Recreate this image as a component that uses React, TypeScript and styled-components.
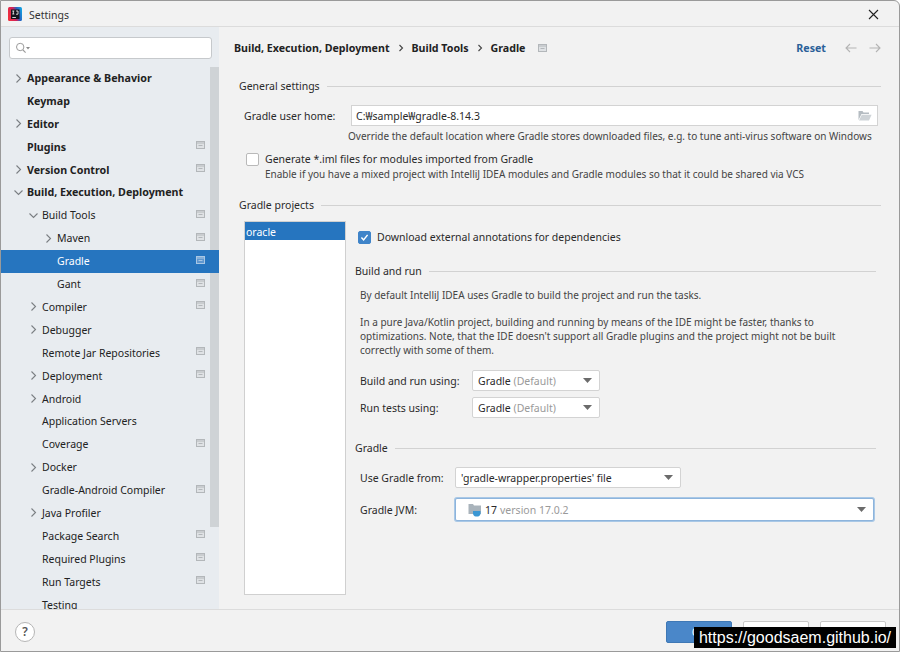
import React, { FC } from "react";
import styled, { createGlobalStyle } from "styled-components";

const FONT = `"Noto Sans", "Open Sans", sans-serif`;

const GlobalStyle = createGlobalStyle`
  html, body {
    margin: 0;
    padding: 0;
    background: #fff;
    font-family: ${FONT};
    font-size: 10.5px;
    color: #2a2a2a;
  }
  * { box-sizing: border-box; }
`;

interface TreeItem {
  label: string;
  depth: number;
  arrow?: "right" | "down";
  bold?: boolean;
  scoped?: boolean;
  selected?: boolean;
}

const treeItems: TreeItem[] = [
  { label: "Appearance & Behavior", depth: 0, arrow: "right", bold: true },
  { label: "Keymap", depth: 0, bold: true },
  { label: "Editor", depth: 0, arrow: "right", bold: true },
  { label: "Plugins", depth: 0, bold: true, scoped: true },
  { label: "Version Control", depth: 0, arrow: "right", bold: true, scoped: true },
  { label: "Build, Execution, Deployment", depth: 0, arrow: "down", bold: true },
  { label: "Build Tools", depth: 1, arrow: "down", scoped: true },
  { label: "Maven", depth: 2, arrow: "right", scoped: true },
  { label: "Gradle", depth: 2, scoped: true, selected: true },
  { label: "Gant", depth: 2, scoped: true },
  { label: "Compiler", depth: 1, arrow: "right", scoped: true },
  { label: "Debugger", depth: 1, arrow: "right" },
  { label: "Remote Jar Repositories", depth: 1, scoped: true },
  { label: "Deployment", depth: 1, arrow: "right", scoped: true },
  { label: "Android", depth: 1, arrow: "right" },
  { label: "Application Servers", depth: 1 },
  { label: "Coverage", depth: 1, scoped: true },
  { label: "Docker", depth: 1, arrow: "right" },
  { label: "Gradle-Android Compiler", depth: 1, scoped: true },
  { label: "Java Profiler", depth: 1, arrow: "right" },
  { label: "Package Search", depth: 1, scoped: true },
  { label: "Required Plugins", depth: 1, scoped: true },
  { label: "Run Targets", depth: 1, scoped: true },
  { label: "Testing", depth: 1 },
];

const Page = styled.div`
  position: relative;
  width: 900px;
  height: 653px;
  overflow: hidden;
  background: #fff;
`;

const Window = styled.div`
  display: flex;
  flex-direction: column;
  width: 900px;
  height: 652px;
  background: #f2f2f2;
  border: 1px solid #9a9a9a;
  border-radius: 0 6px 0 0;
  overflow: hidden;
`;

const TitleBar = styled.div`
  display: flex;
  align-items: center;
  flex: none;
  height: 26px;
  padding: 1px 20px 0 7px;
  gap: 7px;
  border-bottom: 1px solid #dcdcdc;
  font-size: 10.5px;
  color: #333;
`;

const TitleText = styled.span`
  flex: 1;
  padding-top: 1px;
`;

const Body = styled.div`
  display: flex;
  flex: 1;
  min-height: 0;
`;

const Sidebar = styled.div`
  position: relative;
  flex: none;
  width: 218px;
  background: #e8ecf0;
  padding-top: 10px;
  overflow: hidden;
`;

const SearchBox = styled.div`
  display: flex;
  align-items: center;
  gap: 1px;
  width: 203px;
  height: 22px;
  margin-left: 8px;
  padding-left: 5px;
  background: #fff;
  border: 1px solid #c6c9cc;
  border-radius: 3px;
`;

const Tree = styled.div`
  display: flex;
  flex-direction: column;
  margin-top: 7.6px;
`;

const Row = styled.div<{ $depth: number; $selected?: boolean; $bold?: boolean }>`
  position: relative;
  z-index: ${(p) => (p.$selected ? 1 : 0)};
  display: flex;
  align-items: center;
  flex: none;
  height: 22.9px;
  padding-left: ${(p) => 11 + p.$depth * 15}px;
  padding-right: 14px;
  background: ${(p) => (p.$selected ? "#2675bf" : "transparent")};
  color: ${(p) => (p.$selected ? "#fff" : "#222")};
  font-weight: ${(p) => (p.$bold ? 700 : 400)};
  font-size: ${(p) => (p.$bold ? 10.7 : 10.5)}px;
`;

const ArrowSlot = styled.span`
  display: flex;
  justify-content: center;
  flex: none;
  width: 15px;
  padding-right: 2px;
`;

const RowLabel = styled.span`
  flex: 1;
  white-space: nowrap;
`;

const ScopeSlot = styled.span`
  display: flex;
  margin-bottom: 3px;
`;

const Scrollbar = styled.div`
  position: absolute;
  top: 40px;
  right: 0;
  width: 9px;
  height: 460px;
  background: #cfd3d6;
`;

const Content = styled.div`
  flex: 1;
  min-width: 0;
  padding: 0 18px 0 20px;
`;

const Header = styled.div`
  display: flex;
  align-items: center;
  height: 42px;
  margin-left: -5px;
  font-size: 10.65px;
  font-weight: 700;
  color: #222;
`;

const Crumb = styled.span`
  white-space: nowrap;
`;

const CrumbSep = styled.span`
  display: flex;
  justify-content: center;
  width: 22px;
`;

const HeaderScope = styled.span`
  display: flex;
  margin-left: 13px;
  flex: 1;
`;

const ResetLink = styled.span`
  color: #2a6099;
  margin-right: 19px;
`;

const NavIcons = styled.span`
  display: flex;
  gap: 12px;
`;

const SectionTitle = styled.div<{ $top?: number; $right?: number }>`
  display: flex;
  align-items: center;
  gap: 7px;
  height: 18px;
  margin-top: ${(p) => p.$top ?? 0}px;
  margin-right: ${(p) => p.$right ?? 0}px;
  font-size: 10.5px;
  white-space: nowrap;
  &::after {
    content: "";
    flex: 1;
    height: 1px;
    background: #d2d2d2;
  }
`;

const FieldRow = styled.div<{ $top: number; $left: number; $labelWidth: number }>`
  display: flex;
  align-items: center;
  margin-top: ${(p) => p.$top}px;
  margin-left: ${(p) => p.$left}px;
  & > label {
    flex: none;
    width: ${(p) => p.$labelWidth}px;
    font-size: 10.5px;
  }
`;

const PathInput = styled.div`
  display: flex;
  align-items: center;
  justify-content: space-between;
  width: 527px;
  height: 21px;
  padding: 0 5px 0 4px;
  background: #fff;
  border: 1px solid #d3d3d3;
  font-size: 10.5px;
`;

const Hint = styled.div<{ $top: number; $left: number }>`
  margin-top: ${(p) => p.$top}px;
  margin-left: ${(p) => p.$left}px;
  font-size: 10px;
  line-height: 14px;
  color: #444;
  white-space: nowrap;
`;

const CheckRow = styled.div<{ $top: number; $left: number }>`
  display: flex;
  align-items: center;
  gap: 6px;
  height: 16px;
  margin-top: ${(p) => p.$top}px;
  margin-left: ${(p) => p.$left}px;
  font-size: 10.5px;
  white-space: nowrap;
`;

const CheckBox = styled.span<{ $checked?: boolean }>`
  display: flex;
  align-items: center;
  justify-content: center;
  flex: none;
  width: 13px;
  height: 13px;
  border-radius: 2px;
  background: ${(p) => (p.$checked ? "#3f84c9" : "#fff")};
  border: 1px solid ${(p) => (p.$checked ? "#3f84c9" : "#b9b9b9")};
`;

const ProjectArea = styled.div`
  display: flex;
  margin-top: 7px;
  margin-left: 5px;
`;

const ProjectList = styled.div`
  flex: none;
  width: 102px;
  height: 374px;
  background: #fff;
  border: 1px solid #d0d0d0;
`;

const ProjectItem = styled.div`
  height: 18px;
  line-height: 17px;
  padding: 2px 0 0 1px;
  background: #2675bf;
  color: #fff;
  font-size: 10.5px;
`;

const ProjectPane = styled.div`
  flex: 1;
  min-width: 0;
  padding-left: 9px;
`;

const Select = styled.div<{ $width: number; $focused?: boolean }>`
  display: flex;
  align-items: center;
  justify-content: space-between;
  flex: none;
  width: ${(p) => p.$width}px;
  height: ${(p) => (p.$focused ? 23 : 21)}px;
  padding: 0 7px 0 5px;
  background: #fff;
  border: 1px solid ${(p) => (p.$focused ? "#8db4dc" : "#d3d3d3")};
  border-radius: 2px;
  box-shadow: ${(p) => (p.$focused ? "0 0 0 1px #a9c8e6" : "none")};
  font-size: 10.5px;
`;

const SelectValue = styled.span`
  display: flex;
  align-items: center;
  gap: 3px;
  margin-left: 7px;
`;

const Muted = styled.span`
  color: #9a9a9a;
`;

const Footer = styled.div`
  display: flex;
  align-items: center;
  flex: none;
  height: 42px;
  padding: 2px 13px 0 14px;
  border-top: 1px solid #dcdcdc;
`;

const HelpButton = styled.div`
  display: flex;
  align-items: center;
  justify-content: center;
  width: 20px;
  height: 20px;
  background: #fff;
  border: 1px solid #b5b5b5;
  border-radius: 50%;
  font-size: 12px;
  font-weight: 600;
  color: #555;
`;

const ButtonBar = styled.div`
  display: flex;
  gap: 11px;
  margin-left: auto;
`;

const DialogButton = styled.div<{ $primary?: boolean }>`
  display: flex;
  align-items: center;
  justify-content: center;
  width: 66px;
  height: 22px;
  border-radius: 2px;
  font-size: 10.5px;
  background: ${(p) => (p.$primary ? "#4a87c9" : "#fff")};
  color: ${(p) => (p.$primary ? "#fff" : "#222")};
  border: 1px solid ${(p) => (p.$primary ? "#3f78b5" : "#c9c9c9")};
`;

const Watermark = styled.div`
  position: absolute;
  left: 694px;
  top: 627px;
  z-index: 5;
  width: 202px;
  height: 21px;
  line-height: 21px;
  text-align: center;
  background: #000;
  color: #fff;
  font-family: "Liberation Sans", Arial, sans-serif;
  font-size: 16px;
  white-space: nowrap;
`;

const Logo: FC = () => (
  <svg width="14" height="14" viewBox="0 0 14 14">
    <defs>
      <linearGradient id="lg" x1="0" y1="0.6" x2="1" y2="0.3">
        <stop offset="0" stopColor="#f0303c" />
        <stop offset="0.45" stopColor="#d0205a" />
        <stop offset="0.7" stopColor="#2a5fc0" />
        <stop offset="1" stopColor="#12a0e0" />
      </linearGradient>
    </defs>
    <rect width="14" height="14" rx="1.5" fill="url(#lg)" />
    <rect x="3" y="2.5" width="8.5" height="9.5" fill="#14141c" />
    <path d="M4.3 4h2M5.3 4v3M4.3 7h2M8 4h2v3.2H8" stroke="#fff" strokeWidth="0.8" fill="none" />
    <rect x="4.3" y="10" width="3.6" height="0.8" fill="#fff" />
  </svg>
);

const SearchIcon: FC = () => (
  <svg width="16" height="12" viewBox="0 0 16 12">
    <circle cx="5.2" cy="5" r="3.7" fill="none" stroke="#9b9b9b" strokeWidth="1" />
    <path d="M8 8l2.6 2.6" stroke="#9b9b9b" strokeWidth="1.1" />
    <path d="M11 5h4l-2 2.4z" fill="#8a8a8a" />
  </svg>
);

const Arrow: FC<{ dir: "right" | "down" }> = ({ dir }) => (
  <svg width="11" height="11" viewBox="0 0 11 11">
    <path
      d={dir === "right" ? "M3.5 1.5l4 4-4 4" : "M1.5 3.5l4 4 4-4"}
      fill="none"
      stroke="#7b7f83"
      strokeWidth="1.1"
    />
  </svg>
);

const ScopeIcon: FC<{ light?: boolean }> = ({ light }) => {
  const c = light ? "#a9c7e4" : "#b3b7ba";
  return (
    <svg width="9" height="8" viewBox="0 0 9 8">
      <rect x="0.5" y="0.5" width="8" height="7" fill={light ? "#5f97cf" : "#dfe2e5"} stroke={c} />
      <path d="M0.5 2h8" stroke={c} />
      <path d="M2.5 4.5h4" stroke={c} />
    </svg>
  );
};

const FolderOpenIcon: FC = () => (
  <svg width="14" height="11" viewBox="0 0 14 11">
    <path d="M0.5 10V1h4l1 1.5H11v1.5H3.5L0.5 10z" fill="#b5bcc2" />
    <path d="M3.8 4.8H13.6L11 10.5H1z" fill="#ced3d7" />
  </svg>
);

const ResetArrow: FC<{ flip?: boolean }> = ({ flip }) => (
  <svg width="12" height="10" viewBox="0 0 12 10" style={flip ? { transform: "scaleX(-1)" } : undefined}>
    <path d="M11.5 5H1M5 1L1 5l4 4" fill="none" stroke="#b4b4b4" strokeWidth="1.1" />
  </svg>
);

const CheckMark: FC = () => (
  <svg width="9" height="9" viewBox="0 0 9 9">
    <path d="M1.4 4.6l2.2 2.3 4-5" fill="none" stroke="#fff" strokeWidth="1.5" />
  </svg>
);

const Caret: FC = () => (
  <svg width="9" height="5" viewBox="0 0 9 5">
    <path d="M0 0h9L4.5 5z" fill="#6b6b6b" />
  </svg>
);

const JdkIcon: FC = () => (
  <svg width="14" height="14" viewBox="0 0 14 14">
    <path d="M0.5 11V1h4.5l1 1.5H13V11z" fill="#a9b3bb" />
    <path d="M5 8h7.5v2.6c0 1.5-1.2 2.9-2.7 2.9H7.7C6.2 13.5 5 12.1 5 10.6z" fill="#3b97d3" />
  </svg>
);

const CrumbArrow: FC = () => (
  <svg width="6" height="8" viewBox="0 0 6 8">
    <path d="M1.5 1l3 3-3 3" fill="none" stroke="#444" strokeWidth="1.1" />
  </svg>
);

const CloseIcon: FC = () => (
  <svg width="11" height="11" viewBox="0 0 11 11">
    <path d="M1 1l9 9M10 1l-9 9" stroke="#222" strokeWidth="1.1" />
  </svg>
);

const TreeRow: FC<{ item: TreeItem }> = ({ item }) => (
  <Row $depth={item.depth} $selected={item.selected} $bold={item.bold}>
    <ArrowSlot>{item.arrow && <Arrow dir={item.arrow} />}</ArrowSlot>
    <RowLabel>{item.label}</RowLabel>
    {item.scoped && (
      <ScopeSlot>
        <ScopeIcon light={item.selected} />
      </ScopeSlot>
    )}
  </Row>
);

const App: FC = () => (
  <Page>
    <GlobalStyle />
    <Window>
      <TitleBar>
        <Logo />
        <TitleText>Settings</TitleText>
        <CloseIcon />
      </TitleBar>
      <Body>
        <Sidebar>
          <SearchBox>
            <SearchIcon />
          </SearchBox>
          <Tree>
            {treeItems.map((item) => (
              <TreeRow key={item.label} item={item} />
            ))}
          </Tree>
          <Scrollbar />
        </Sidebar>
        <Content>
          <Header>
            <Crumb>Build, Execution, Deployment</Crumb>
            <CrumbSep><CrumbArrow /></CrumbSep>
            <Crumb>Build Tools</Crumb>
            <CrumbSep><CrumbArrow /></CrumbSep>
            <Crumb>Gradle</Crumb>
            <HeaderScope><ScopeIcon /></HeaderScope>
            <ResetLink>Reset</ResetLink>
            <NavIcons>
              <ResetArrow />
              <ResetArrow flip />
            </NavIcons>
          </Header>
          <SectionTitle $top={8}>General settings</SectionTitle>
          <FieldRow $top={10} $left={5} $labelWidth={107}>
            <label>Gradle user home:</label>
            <PathInput>
              C:₩sample₩gradle-8.14.3
              <FolderOpenIcon />
            </PathInput>
          </FieldRow>
          <Hint $top={3} $left={109}>
            Override the default location where Gradle stores downloaded files, e.g. to tune anti-virus software on Windows
          </Hint>
          <CheckRow $top={8} $left={7}>
            <CheckBox />
            Generate *.iml files for modules imported from Gradle
          </CheckRow>
          <Hint $top={0} $left={26}>
            Enable if you have a mixed project with IntelliJ IDEA modules and Gradle modules so that it could be shared via VCS
          </Hint>
          <SectionTitle $top={15}>Gradle projects</SectionTitle>
          <ProjectArea>
            <ProjectList>
              <ProjectItem>oracle</ProjectItem>
            </ProjectList>
            <ProjectPane>
              <CheckRow $top={8} $left={3}>
                <CheckBox $checked><CheckMark /></CheckBox>
                Download external annotations for dependencies
              </CheckRow>
              <SectionTitle $top={17} $right={5}>Build and run</SectionTitle>
              <Hint $top={8} $left={5}>By default IntelliJ IDEA uses Gradle to build the project and run the tasks.</Hint>
              <Hint $top={13} $left={5}>
                In a pure Java/Kotlin project, building and running by means of the IDE might be faster, thanks to
                <br />
                optimizations. Note, that the IDE doesn't support all Gradle plugins and the project might not be built
                <br />
                correctly with some of them.
              </Hint>
              <FieldRow $top={13} $left={5} $labelWidth={112}>
                <label>Build and run using:</label>
                <Select $width={128}>
                  <span>Gradle <Muted>(Default)</Muted></span>
                  <Caret />
                </Select>
              </FieldRow>
              <FieldRow $top={6} $left={5} $labelWidth={112}>
                <label>Run tests using:</label>
                <Select $width={128}>
                  <span>Gradle <Muted>(Default)</Muted></span>
                  <Caret />
                </Select>
              </FieldRow>
              <SectionTitle $top={21} $right={5}>Gradle</SectionTitle>
              <FieldRow $top={10} $left={5} $labelWidth={95}>
                <label>Use Gradle from:</label>
                <Select $width={226}>
                  <span>'gradle-wrapper.properties' file</span>
                  <Caret />
                </Select>
              </FieldRow>
              <FieldRow $top={10} $left={5} $labelWidth={95}>
                <label>Gradle JVM:</label>
                <Select $width={419} $focused>
                  <SelectValue>
                    <JdkIcon />
                    17 <Muted>version 17.0.2</Muted>
                  </SelectValue>
                  <Caret />
                </Select>
              </FieldRow>
            </ProjectPane>
          </ProjectArea>
        </Content>
      </Body>
      <Footer>
        <HelpButton>?</HelpButton>
        <ButtonBar>
          <DialogButton $primary>OK</DialogButton>
          <DialogButton>Cancel</DialogButton>
          <DialogButton>Apply</DialogButton>
        </ButtonBar>
      </Footer>
    </Window>
    <Watermark>https://goodsaem.github.io/</Watermark>
  </Page>
);

export default App;
